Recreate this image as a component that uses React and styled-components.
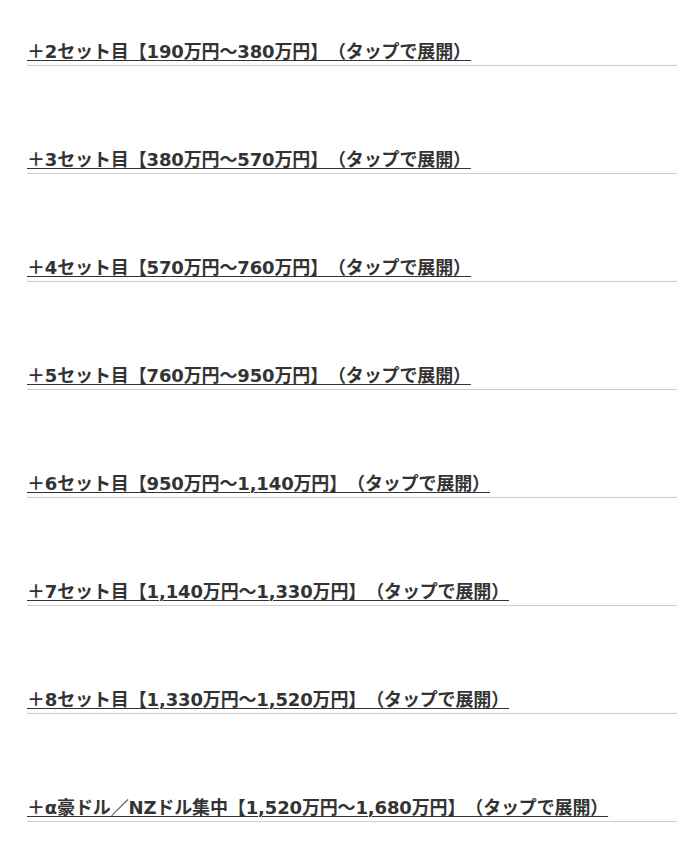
import React from "react";
import styled, { createGlobalStyle } from "styled-components";

const Global = createGlobalStyle`
  html, body { margin: 0; padding: 0; background: #fff; }
  body {
    font-family: "DejaVu Sans", "Noto Sans CJK JP", sans-serif;
    color: #333;
  }
`;

const List = styled.div`
  display: flex;
  flex-direction: column;
  gap: 80px;
  padding: 38px 19px 40px 27px;
`;

const Toggle = styled.div`
  border-bottom: 1px solid #ccc;
  cursor: pointer;
`;

const Label = styled.span`
  display: inline-block;
  font-size: 18px;
  font-weight: bold;
  line-height: 27px;
  letter-spacing: -0.14px;
  color: #333;
  text-decoration: underline;
  text-decoration-thickness: 1px;
  text-underline-offset: 2px;
  white-space: nowrap;
  text-spacing-trim: space-all;
`;

const sets = [
  "＋2セット目【190万円～380万円】（タップで展開）",
  "＋3セット目【380万円～570万円】（タップで展開）",
  "＋4セット目【570万円～760万円】（タップで展開）",
  "＋5セット目【760万円～950万円】（タップで展開）",
  "＋6セット目【950万円～1,140万円】（タップで展開）",
  "＋7セット目【1,140万円～1,330万円】（タップで展開）",
  "＋8セット目【1,330万円～1,520万円】（タップで展開）",
  "＋α豪ドル／NZドル集中【1,520万円～1,680万円】（タップで展開）",
];

export default function App() {
  return (
    <>
      <Global />
      <List>
        {sets.map((t) => (
          <Toggle key={t}>
            <Label>{t}</Label>
          </Toggle>
        ))}
      </List>
    </>
  );
}
